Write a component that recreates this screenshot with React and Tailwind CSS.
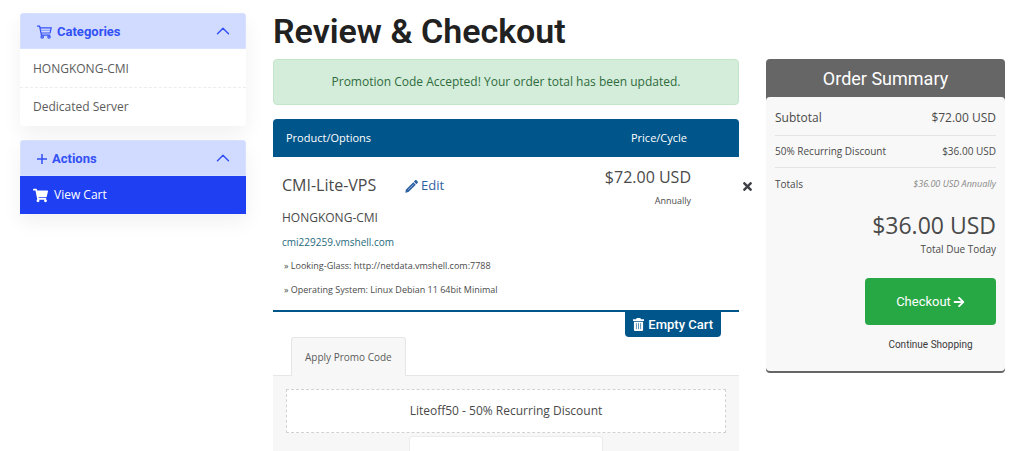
import { ChevronUp } from 'lucide-react'
import React, { useState } from 'react'
import { FaArrowRight, FaShoppingCart, FaTimes } from 'react-icons/fa'

const categories = ['HONGKONG-CMI', 'Dedicated Server']

const product = {
  name: 'CMI-Lite-VPS',
  group: 'HONGKONG-CMI',
  domain: 'cmi229259.vmshell.com',
  price: '$72.00 USD',
  cycle: 'Annually',
  options: [
    'Looking-Glass: http://netdata.vmshell.com:7788',
    'Operating System: Linux Debian 11 64bit Minimal'
  ]
}

// Thin outlined cart used in the sidebar heading
const CartOutline = () => (
  <svg width="15" height="14" viewBox="0 0 15 14" fill="none" stroke="currentColor" strokeWidth="1.2" aria-hidden="true">
    <path d="M0 1.2h2.6l1.8 9h8.8" />
    <path d="M3 2.8h11.200l-1.100 5.200H4" />
    <path d="M3.500 5.300h10.200" strokeWidth="0.500" />
    <circle cx="5.200" cy="12" r="1.200" />
    <circle cx="12" cy="12" r="1.200" />
  </svg>
)

const PlusIcon = () => (
  <svg width="10" height="10" viewBox="0 0 10 10" stroke="currentColor" strokeWidth="1.5" aria-hidden="true">
    <path d="M5 0v10M0 5h10" />
  </svg>
)

const PencilIcon = () => (
  <svg width="13" height="13" viewBox="0 0 13 13" fill="currentColor" aria-hidden="true">
    <path d="M8.900 1.700l2.500 2.500 1.100-1.100c.6-.6.6-1.200 0-1.800L11.700.5c-.6-.6-1.200-.6-1.800 0z" />
    <path d="M8.300 2.300L1 9.500.2 12.800l3.300-.8 7.300-7.200z" />
    <path d="M3.200 9.700l5.300-5.200" stroke="#a9c3e3" strokeWidth="0.700" />
  </svg>
)

const TrashIcon = () => (
  <svg width="11" height="13" viewBox="0 0 12 14" fill="none" aria-hidden="true">
    <path fill="currentColor" d="M4 0h4l.7 1.2H12v1.9H0V1.2h3.3zM1 4h10v8.6c0 .8-.6 1.4-1.4 1.4H2.4C1.6 14 1 13.4 1 12.6z" />
    <path stroke="#00558a" strokeWidth="0.7" d="M3.7 5.5V12M6 5.5V12M8.3 5.5V12" />
  </svg>
)

const SidebarPanel = ({ icon, title, children }) => {
  const [open, setOpen] = useState(true)

  return (
    <section className="rounded-[3px] bg-white shadow-[0_8px_20px_rgba(0,0,0,0.06)]">
      <button
        type="button"
        aria-expanded={open}
        onClick={() => setOpen(!open)}
        className="flex h-9 w-full items-center justify-between rounded-t-[3px] border border-[#d7e0ff] bg-[#d1dbff] pl-4 pr-[11px] font-['Roboto',sans-serif] text-[13px] font-bold text-[#3350f5]"
      >
        <span className="flex items-center gap-[5px] pt-0.5">
          {icon}
          {title}
        </span>
        <ChevronUp size={22} strokeWidth={1.6} className={open ? '' : 'rotate-180'} />
      </button>
      {open && children}
    </section>
  )
}

const Sidebar = () => (
  <aside className="space-y-3.5 pt-[13px]">
    <SidebarPanel icon={<CartOutline />} title="Categories">
      <nav className="divide-y divide-dashed divide-[#ececec] pt-px">
        {categories.map((name) => (
          <a key={name} href="#" className="flex h-[38px] items-center px-[13px] text-[12px] text-[#5c5c5c]">
            {name}
          </a>
        ))}
      </nav>
    </SidebarPanel>
    <SidebarPanel icon={<PlusIcon />} title="Actions">
      <a href="#" className="flex h-[38px] items-center gap-1.5 bg-[#1e3ff2] px-[13px] text-[12px] text-white">
        <FaShoppingCart size={15} />
        View Cart
      </a>
    </SidebarPanel>
  </aside>
)

const CartItem = () => (
  <div className="flex items-start border-b-2 border-[#00558a] pt-2 pb-2 pl-[9px]">
    <div className="min-w-0 flex-1 pt-2">
      <div className="flex items-center">
        <h2 className="w-[123px] text-[16px] leading-6 text-[#4a4a4a]">{product.name}</h2>
        <a href="#" className="flex items-center gap-[3px] pt-0.5 text-[13px] text-[#2f62a3]">
          <PencilIcon />
          Edit
        </a>
      </div>
      <p className="mt-[9px] text-[12px] leading-6 text-[#4a4a4a]">{product.group}</p>
      <p className="text-[10px] leading-6 text-[#1f6a7d]">{product.domain}</p>
      {product.options.map((option) => (
        <p key={option} className="pl-0.5 text-[9px] leading-6 text-[#4a4a4a]">» {option}</p>
      ))}
    </div>
    <div className="text-right text-[#4a4a4a]">
      <p className="text-[16px] leading-6">{product.price}</p>
      <p className="text-[9px] leading-6">{product.cycle}</p>
    </div>
    <button type="button" aria-label="Remove item" className="-mr-[15px] ml-[50px] pt-[15px] text-[#3f3f46]">
      <FaTimes size={13} />
    </button>
  </div>
)

const PromoCode = () => (
  <div>
    <div className="flex px-[18px]" role="tablist">
      <button
        type="button"
        role="tab"
        aria-selected="true"
        className="-mb-px h-[39px] rounded-t-[3px] border border-b-0 border-[#e6e6e6] bg-[#f7f7f7] px-[13px] text-[10px] text-[#5c5c5c]"
      >
        Apply Promo Code
      </button>
    </div>
    <div className="flex flex-col items-center gap-[3px] border-t border-[#e6e6e6] bg-[#f7f7f7] px-[13px] pt-[13px] pb-4">
      <div className="flex h-11 w-full items-center justify-center border border-dashed border-[#d2d2d2] bg-white text-[12px] text-[#4a4a4a]">
        Liteoff50 - 50% Recurring Discount
      </div>
      <button type="button" aria-label="Remove Promotion Code" className="h-9 w-[194px] rounded-[3px] border border-[#ececec] bg-white" />
    </div>
  </div>
)

const OrderSummary = () => (
  <aside className="mt-[59px] self-start rounded-[4px] border-b-2 border-[#666666] bg-[#666666] text-[#4a4a4a]">
    <h2 className="flex h-[38px] items-center justify-center font-['Roboto',sans-serif] text-[18px] text-white">
      Order Summary
    </h2>
    <div className="rounded-[4px] bg-[#f8f8f8] px-[9px] pt-px pb-[18px]">
      <div className="flex h-[38px] items-center justify-between border-b border-[#e4e4e4] pt-[3px] text-[12px]">
        <span>Subtotal</span>
        <span>$72.00 USD</span>
      </div>
      <div className="flex h-8 items-center justify-between border-b border-[#e4e4e4] text-[10px]">
        <span>50% Recurring Discount</span>
        <span>$36.00 USD</span>
      </div>
      <div className="flex h-8 items-center justify-between text-[10px]">
        <span>Totals</span>
        <span className="text-[9px] italic text-[#888888]">$36.00 USD Annually</span>
      </div>
      <div className="mt-[9px] text-right">
        <p className="text-[23px] leading-8">$36.00 USD</p>
        <p className="text-[10px] leading-4">Total Due Today</p>
      </div>
      <div className="mt-[21px] flex flex-col items-end font-['Roboto',sans-serif]">
        <button type="button" className="flex h-[47px] w-[131px] items-center justify-center gap-0.5 rounded-[4px] bg-[#28a745] text-[13px] text-white">
          Checkout
          <FaArrowRight size={12} />
        </button>
        <a href="#" className="mt-3 w-[131px] text-center text-[10px] leading-4 text-[#3a3a3a]">
          Continue Shopping
        </a>
      </div>
    </div>
  </aside>
)

const App = () => {
  return (
    <div className="grid h-screen grid-cols-[226fr_466fr_239fr] gap-x-[27px] overflow-hidden bg-white pl-5 pr-[19px] font-['Open_Sans',sans-serif]">
      <Sidebar />
      <main className="min-w-0">
        <h1 className="pt-[11px] font-['Roboto',sans-serif] text-[34px] leading-10 font-semibold text-[#212121]">
          Review &amp; Checkout
        </h1>
        <div role="status" className="mt-2 flex h-[46px] items-center justify-center rounded-[4px] border border-[#c3e6cb] bg-[#d4edda] text-[12px] text-[#2f6b3d]">
          Promotion Code Accepted! Your order total has been updated.
        </div>
        <div className="mt-3.5 flex h-[38px] items-center justify-between rounded-t-[4px] bg-[#00558a] pl-[13px] pr-[52px] text-[11px] text-white">
          <span>Product/Options</span>
          <span>Price/Cycle</span>
        </div>
        <CartItem />
        <div className="flex justify-end pr-[18px]">
          <button type="button" className="flex h-[25px] items-center gap-1 rounded-b-[4px] bg-[#00558a] px-2 font-['Roboto',sans-serif] text-[13px] font-medium text-white">
            <TrashIcon />
            Empty Cart
          </button>
        </div>
        <PromoCode />
      </main>
      <OrderSummary />
    </div>
  )
}

export default App
